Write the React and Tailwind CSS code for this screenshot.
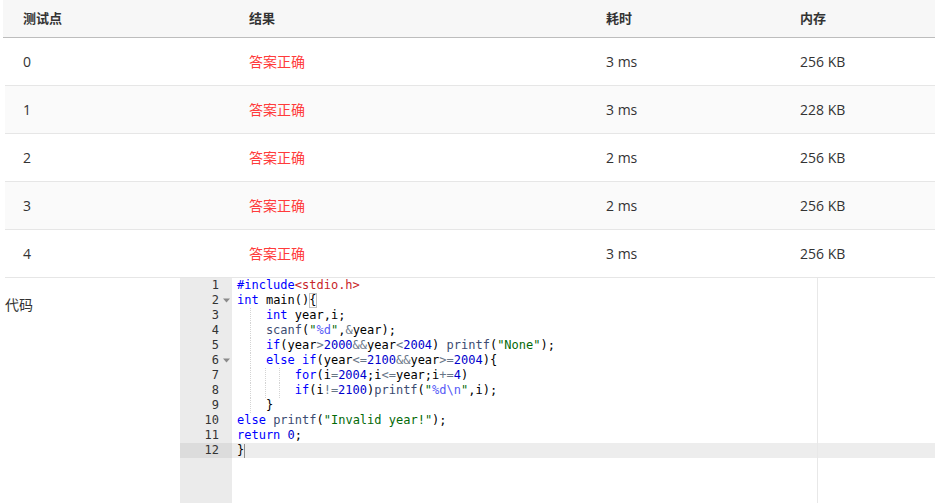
import React from 'react';

const rows = [
  { id: 0, time: '3 ms', mem: '256 KB' },
  { id: 1, time: '3 ms', mem: '228 KB' },
  { id: 2, time: '2 ms', mem: '256 KB' },
  { id: 3, time: '2 ms', mem: '256 KB' },
  { id: 4, time: '3 ms', mem: '256 KB' },
];

const KW = 'text-[#0000ff]';
const FN = 'text-[#3c4c72]';
const STR = 'text-[#036a07]';
const NUM = 'text-[#0000cd]';
const OP = 'text-[#687687]';
const ESC = 'text-[#585cf6]';
const INC = 'text-[#c8262a]';

// each line: [indent, tokens]
const code = [
  [0, [['#include', KW], ['<stdio.h>', INC]]],
  [0, [['int', KW], [' main()'], ['{', 'brace']], true],
  [4, [['int', KW], [' year,i;']]],
  [4, [['scanf', FN], ['('], ['"', STR], ['%d', ESC], ['"', STR], [','], ['&', OP], ['year);']]],
  [4, [['if', KW], ['(year'], ['>', OP], ['2000', NUM], ['&&', OP], ['year'], ['<', OP], ['2004', NUM], [') '], ['printf', FN], ['('], ['"None"', STR], [');']]],
  [4, [['else', KW], [' '], ['if', KW], ['(year'], ['<=', OP], ['2100', NUM], ['&&', OP], ['year'], ['>=', OP], ['2004', NUM], ['){']], true],
  [8, [['for', KW], ['(i'], ['=', OP], ['2004', NUM], [';i'], ['<=', OP], ['year;i'], ['+=', OP], ['4', NUM], [')']]],
  [8, [['if', KW], ['(i'], ['!=', OP], ['2100', NUM], [')'], ['printf', FN], ['('], ['"', STR], ['%d\\n', ESC], ['"', STR], [',i);']]],
  [4, [['}']]],
  [0, [['else', KW], [' '], ['printf', FN], ['('], ['"Invalid year!"', STR], [');']]],
  [0, [['return', KW], [' '], ['0', NUM], [';']]],
  [0, [['}'], ['', 'cursor']]],
];

const FoldArrow = () => (
  <svg width="7" height="5" viewBox="0 0 7 5" className="ml-[4px]">
    <path d="M0 0.5 L7 0.5 L3.5 4.5 Z" fill="#8a8a8a" />
  </svg>
);

const Indent = ({ n }) => {
  const chunks = n / 2;
  return (
    <>
      {Array.from({ length: chunks }).map((_, k) => (
        <span
          key={k}
          className={`inline-block w-[2ch] h-[15px] align-top ${k < chunks - 1 ? 'border-r border-dotted border-[#d4d4d4]' : ''}`}
        >
          {'  '}
        </span>
      ))}
    </>
  );
};

const CodeEditor = () => (
  <div className="relative flex flex-1 h-[240px] bg-white overflow-hidden" style={{ fontFamily: '"DejaVu Sans Mono", "Liberation Mono", monospace' }}>
    <div className="w-[52px] shrink-0 bg-[#ebebeb] text-[12px] text-[#333]">
      {code.map((line, i) => (
        <div key={i} className={`flex items-center justify-end h-[15px] leading-[15px] pr-[2px] ${i === 11 ? 'bg-[#dcdcdc]' : ''}`}>
          <span>{i + 1}</span>
          <span className="w-[11px] flex items-center">{line[2] ? <FoldArrow /> : null}</span>
        </div>
      ))}
    </div>
    <div className="flex-1 pl-[5px] text-[12px] text-black">
      {code.map(([indent, tokens], i) => (
        <div key={i} className={`h-[15px] leading-[15px] whitespace-pre -mr-[200px] ${i === 11 ? 'bg-[#ededed] -ml-[5px] pl-[5px]' : ''}`}>
          <Indent n={indent} />
          {tokens.map(([t, c], j) => {
            if (c === 'brace') {
              return (
                <span key={j} className="inline-block h-[15px] align-top outline outline-1 outline-[#c0c0c0] -outline-offset-1">
                  {t}
                </span>
              );
            }
            if (c === 'cursor') {
              return <span key={j} className="inline-block w-px h-[14px] align-top mt-[1px] bg-[#8c8c8c]" />;
            }
            return (
              <span key={j} className={c}>
                {t}
              </span>
            );
          })}
        </div>
      ))}
    </div>
    <div className="absolute top-0 bottom-0 left-[637px] w-px bg-[#e8e8e8]" />
  </div>
);

export default function App() {
  return (
    <div className="bg-white w-[935px] h-[503px] overflow-hidden pl-[5px] text-[#333]" style={{ fontFamily: '"Open Sans", "Noto Sans CJK SC", sans-serif' }}>
      <div className="grid grid-cols-[226px_357px_194px_1fr] h-[38px] items-center bg-[#f7f7f7] border-b border-[#bdbdbd] text-[13px] font-bold -ml-[2px] pl-[2px]">
        <div className="pl-[18px]">测试点</div>
        <div className="pl-[18px]">结果</div>
        <div className="pl-[18px]">耗时</div>
        <div className="pl-[18px]">内存</div>
      </div>
      {rows.map((r) => (
        <div
          key={r.id}
          className={`grid grid-cols-[226px_357px_194px_1fr] h-[48px] items-center border-b border-[#e6e6e6] text-[14px] ${r.id % 2 === 1 ? 'bg-[#fafafa]' : 'bg-white'}`}
        >
          <div className="pl-[18px]">{r.id}</div>
          <div className="pl-[18px] text-[#ff3b3b]">答案正确</div>
          <div className="pl-[18px]">{r.time}</div>
          <div className="pl-[18px]">{r.mem}</div>
        </div>
      ))}
      <div className="flex">
        <div className="w-[175px] shrink-0 pt-[17px] text-[14px] leading-[20px]">代码</div>
        <CodeEditor />
      </div>
    </div>
  );
}
